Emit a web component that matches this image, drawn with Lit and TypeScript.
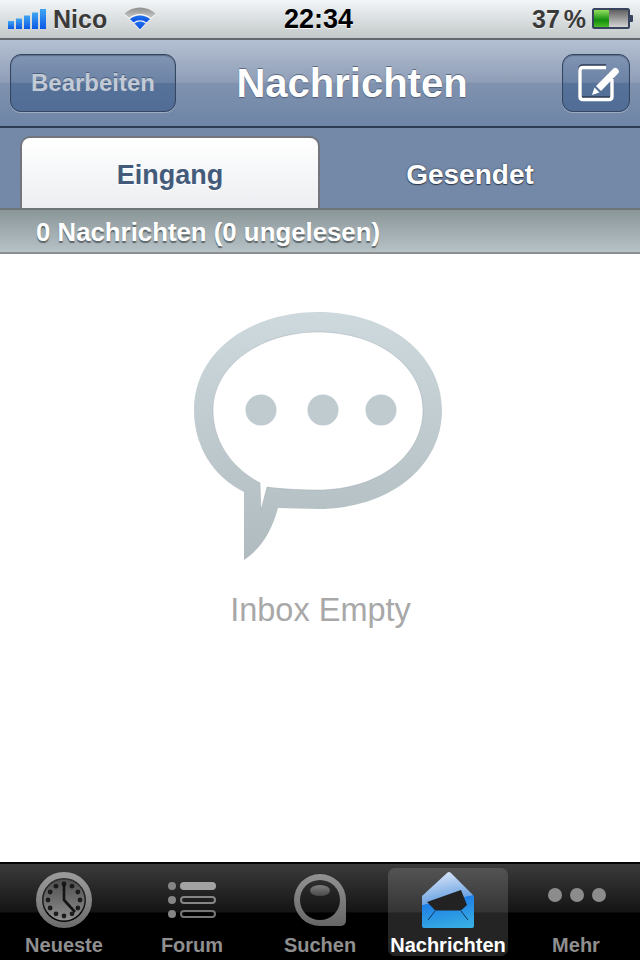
import { LitElement, html, css, svg } from "lit";
import { customElement } from "lit/decorators.js";

const bubbleHole =
  "M260 483C232 468 213 442 213 410C213 366 260 332 318 332C378 332 423 366 423 410C423 456 378 490 318 490C300 490 282 489 267 487L261 510Z";
const bubbleOuter =
  "M244 492C212 476 194 445 194 410C194 352 250 312 318 312C388 312 442 354 442 410C442 468 388 509 318 509L278 508C272 530 262 548 244 560Z";

const clockDots = Array.from({ length: 12 }, (_, i) => {
  const a = (i * Math.PI) / 6;
  return svg`<circle cx=${64 + 16 * Math.sin(a)} cy=${900 - 16 * Math.cos(a)} r="2.4" fill="#1c1c1c"></circle>`;
});

const tabIcons = {
  clock: svg`
    <defs>
      <linearGradient id="clockRing" x1="0" y1="0" x2="0" y2="1"><stop offset="0" stop-color="#9a9a9a"/><stop offset="1" stop-color="#6e6e6e"/></linearGradient>
      <linearGradient id="clockFace" x1="0" y1="0" x2="0" y2="1"><stop offset="0" stop-color="#4e4e4e"/><stop offset="1" stop-color="#8e8e8e"/></linearGradient>
    </defs>
    <circle cx="64" cy="900" r="25" fill="none" stroke="url(#clockRing)" stroke-width="6"></circle>
    <circle cx="64" cy="900" r="20.5" fill="url(#clockFace)"></circle>
    ${clockDots}
    <path d="M64 882V900L75 912" fill="none" stroke="#141414" stroke-width="2.6"></path>`,
  forum: svg`
    <g fill="#858585">
      <circle cx="172" cy="886" r="4"></circle>
      <circle cx="172" cy="900" r="4"></circle>
      <circle cx="172" cy="914" r="4"></circle>
    </g>
    <rect x="180" y="882" width="36" height="8" rx="4" fill="#a2a2a2"></rect>
    <rect x="181" y="897" width="34" height="6" rx="3" fill="none" stroke="#858585" stroke-width="2"></rect>
    <rect x="181" y="911" width="34" height="6" rx="3" fill="none" stroke="#757575" stroke-width="2"></rect>`,
  search: svg`
    <defs>
      <linearGradient id="searchRing" x1="0" y1="0" x2="0" y2="1"><stop offset="0" stop-color="#929292"/><stop offset="1" stop-color="#666"/></linearGradient>
      <linearGradient id="searchGlare" x1="0" y1="0" x2="0" y2="1"><stop offset="0" stop-color="#808080"/><stop offset="1" stop-color="#484848"/></linearGradient>
    </defs>
    <path fill-rule="evenodd" fill="url(#searchRing)" d="M320 874A26 26 0 0 1 346 900V920Q346 926 340 926H320A26 26 0 0 1 320 874ZM320 880A20 20 0 1 0 320 920A20 20 0 1 0 320 880Z"></path>
    <ellipse cx="320" cy="890.5" rx="10" ry="5.5" fill="url(#searchGlare)"></ellipse>`,
  inbox: svg`
    <defs>
      <linearGradient id="envelope" gradientUnits="userSpaceOnUse" x1="446" y1="872" x2="457.3" y2="930.9">
        <stop offset="0" stop-color="#d5e3f8"/><stop offset=".46" stop-color="#6ea4e2"/>
        <stop offset=".47" stop-color="#1f7fe6"/><stop offset="1" stop-color="#39b2e2"/>
      </linearGradient>
    </defs>
    <path fill="url(#envelope)" d="M447 873Q449 871 451 873L474 896V926Q474 928 472 928H424Q422 928 422 926V896Z"></path>
    <path fill="#222" d="M427 902L461 890L467 905L461 910.500H435L432 907Z"></path>
    <path fill="none" stroke="#14385c" stroke-width="1" d="M435 911L428 920M461 911L468 920"></path>`,
  more: svg`
    <g fill="#8c8c8c">
      <circle cx="555" cy="895" r="7"></circle>
      <circle cx="577" cy="895" r="7"></circle>
      <circle cx="599" cy="895" r="7"></circle>
    </g>`,
};

const tabs = [
  { label: "Neueste", x: 4, icon: tabIcons.clock },
  { label: "Forum", x: 132, icon: tabIcons.forum },
  { label: "Suchen", x: 260, icon: tabIcons.search },
  { label: "Nachrichten", x: 388, icon: tabIcons.inbox, active: true },
  { label: "Mehr", x: 516, icon: tabIcons.more },
];

@customElement("app-root")
export class AppRoot extends LitElement {
  static styles = css`
    :host {
      display: flex;
      flex-direction: column;
      width: 640px;
      height: 960px;
      overflow: hidden;
      background: #fff;
      font-family: "Liberation Sans", Arial, sans-serif;
    }
    svg {
      display: block;
    }

    .status {
      flex: 0 0 40px;
      box-sizing: border-box;
      display: grid;
      grid-template-columns: 1fr auto 1fr;
      align-items: center;
      padding: 0 6px 1px 8px;
      border-bottom: 2px solid #63686c;
      background: linear-gradient(#f2f6f8, #c3c8c9);
      font-weight: 700;
      color: #3a3a3a;
      text-shadow: 0 1px 0 rgba(255, 255, 255, 0.8);
    }
    .status-left,
    .status-right {
      display: flex;
      align-items: center;
    }
    .status-right {
      justify-content: flex-end;
    }
    .carrier {
      margin-left: 7px;
      font-size: 25px;
      line-height: 30px;
    }
    .wifi {
      margin-left: 17px;
      filter: drop-shadow(0 1px 0 rgba(255, 255, 255, 0.9));
    }
    .time {
      margin-right: 5px;
      font-size: 27px;
      line-height: 30px;
      color: #000;
    }
    .percent {
      margin-right: 6px;
      font-size: 25px;
      line-height: 30px;
      word-spacing: -3px;
    }

    .nav {
      flex: 0 0 88px;
      box-sizing: border-box;
      display: flex;
      align-items: center;
      justify-content: space-between;
      padding: 0 10px;
      border-bottom: 2px solid #2e3c53;
      background: linear-gradient(#b4c0d2 0, #8f9eb7 49%, #8092af 50%, #6e85a6 100%);
    }
    .nav-btn {
      box-sizing: border-box;
      height: 58px;
      display: flex;
      align-items: center;
      justify-content: center;
      border: 1px solid #33455f;
      border-radius: 11px;
      background: linear-gradient(#8195b3 0, #6c83a6 49%, #567299 50%, #516d96 100%);
      box-shadow: 0 1px 0 rgba(255, 255, 255, 0.3), inset 0 1px 1px rgba(20, 30, 50, 0.35);
    }
    .edit {
      width: 166px;
      font-size: 24px;
      font-weight: 700;
      color: #c2cad6;
      text-shadow: 0 -1px 0 rgba(40, 55, 80, 0.5);
    }
    .compose {
      width: 68px;
    }
    .title {
      margin-right: 34px;
      font-size: 40px;
      line-height: 48px;
      font-weight: 700;
      color: #fff;
      text-shadow: 0 -1px 0 rgba(50, 65, 90, 0.6), 0 1px 1px rgba(50, 65, 90, 0.6);
    }

    .segments {
      flex: 0 0 80px;
      box-sizing: border-box;
      display: grid;
      grid-template-columns: 300px 300px;
      padding: 8px 0 0 20px;
      background: #7489a8;
    }
    .segment {
      display: flex;
      align-items: center;
      justify-content: center;
      font-size: 27px;
      font-weight: 700;
      padding-top: 4px;
    }
    .segment.active {
      box-sizing: border-box;
      border: 2px solid #72767c;
      border-bottom: 0;
      border-radius: 10px 10px 0 0;
      background: linear-gradient(#fff, #eceef1);
      color: #435a7b;
      text-shadow: 0 1px 0 #fff;
    }
    .segment.idle {
      font-size: 28px;
      padding-top: 6px;
      color: #fff;
      text-shadow: 0 0 2px #2f3a4a, 0 1px 1px #2f3a4a;
    }

    .summary {
      flex: 0 0 46px;
      box-sizing: border-box;
      padding: 2px 0 0 36px;
      border-top: 2px solid #6e7576;
      border-bottom: 2px solid #8b8f91;
      background: linear-gradient(#8b9699, #b7c2c7);
      font-size: 25.8px;
      line-height: 40px;
      font-weight: 700;
      color: #fff;
      text-shadow: 0 2px 1px #5d6668;
    }

    .inbox {
      flex: 1;
      display: flex;
      flex-direction: column;
      align-items: center;
      padding-top: 58px;
      margin-left: -4px;
    }
    .empty-label {
      margin: 32px 0 0 5px;
      font-size: 32.5px;
      line-height: 36px;
      color: #a8a8a8;
    }

    .tabbar {
      flex: 0 0 98px;
      box-sizing: border-box;
      display: grid;
      grid-template-columns: repeat(5, 120px);
      gap: 8px;
      padding: 4px 4px 4px;
      border-top: 2px solid #050505;
      background: linear-gradient(#3b3b3b 0, #141414 50%, #000 51%, #000 100%);
    }
    .tab {
      display: flex;
      flex-direction: column;
      align-items: center;
      border-radius: 7px;
      font-size: 20px;
      line-height: 22px;
      font-weight: 700;
      color: #8f8f8f;
    }
    .tab.active {
      background: rgba(255, 255, 255, 0.14);
      color: #fff;
    }
    .tab span {
      padding-top: 2px;
    }
  `;

  render() {
    return html`
      <header class="status">
        <div class="status-left">
          <svg width="38" height="22" viewBox="8 8 38 22">
            <defs>
              <linearGradient id="bars" x1="0" y1="0" x2="0" y2="1">
                <stop offset="0" stop-color="#3fa6f2" /><stop offset="1" stop-color="#0a58e6" />
              </linearGradient>
            </defs>
            <g fill="url(#bars)">
              <rect x="8" y="21" width="6" height="8"></rect>
              <rect x="16" y="18.5" width="6" height="10.5"></rect>
              <rect x="24" y="15.5" width="6" height="13.5"></rect>
              <rect x="32" y="12.5" width="6" height="16.5"></rect>
              <rect x="40" y="9" width="6" height="20"></rect>
            </g>
          </svg>
          <span class="carrier">Nico</span>
          <svg class="wifi" width="32" height="25" viewBox="124 8 32 25">
            <defs>
              <linearGradient id="wifiGray" x1="0" y1="0" x2="0" y2="1">
                <stop offset="0" stop-color="#8e8e8e" /><stop offset="1" stop-color="#c9c9c9" />
              </linearGradient>
              <linearGradient id="wifiBlue" x1="0" y1="0" x2="0" y2="1">
                <stop offset="0" stop-color="#1d6ff0" /><stop offset="1" stop-color="#0d4fd8" />
              </linearGradient>
            </defs>
            <path fill="url(#wifiGray)" d="M124.5 15.5A23 23 0 0 1 155.500 15.500L151 20A17 17 0 0 0 129 20Z"></path>
            <path fill="url(#wifiBlue)" d="M130 21A16 16 0 0 1 150 21L146.500 24.500A10.500 10.500 0 0 0 133.500 24.500Z"></path>
            <path fill="url(#wifiBlue)" d="M134.500 25.500A8.500 8.500 0 0 1 145.500 25.500L140 31.500Z"></path>
          </svg>
        </div>
        <span class="time">22:34</span>
        <div class="status-right">
          <span class="percent">37 %</span>
          <svg width="42" height="22" viewBox="592 9 42 22">
            <defs>
              <linearGradient id="charge" x1="0" y1="0" x2="0" y2="1">
                <stop offset="0" stop-color="#92e060" /><stop offset=".6" stop-color="#118c0c" /><stop offset="1" stop-color="#4cbc28" />
              </linearGradient>
              <linearGradient id="drained" x1="0" y1="0" x2="0" y2="1">
                <stop offset="0" stop-color="#5a5a5a" /><stop offset="1" stop-color="#dadada" />
              </linearGradient>
            </defs>
            <rect x="593" y="10" width="36" height="19" rx="1.500" fill="url(#drained)" stroke="#38435e" stroke-width="2"></rect>
            <rect x="594" y="11" width="15" height="17" fill="url(#charge)"></rect>
            <path d="M630 16H632Q633 16 633 17V22Q633 23 632 23H630Z" fill="#38435e"></path>
          </svg>
        </div>
      </header>

      <nav class="nav">
        <div class="nav-btn edit">Bearbeiten</div>
        <div class="title">Nachrichten</div>
        <div class="nav-btn compose">
          <svg width="48" height="42" viewBox="572 62 48 42">
            <path d="M606 67.500H583Q580 67.500 580 70.500V96.500Q580 99.500 583 99.500H609Q612 99.500 612 96.500V79" fill="none" stroke="#2b3950" stroke-width="3.500" transform="translate(0 -1.500)"></path>
            <path d="M606 67.500H583Q580 67.500 580 70.500V96.500Q580 99.500 583 99.500H609Q612 99.500 612 96.500V79" fill="none" stroke="#fff" stroke-width="3.500"></path>
            <path d="M592 95L594.500 87.500L599.500 92.500Z" fill="#fff"></path>
            <path d="M596 86L613.500 68.500Q615.500 67 617 68.500L618.500 70Q619.500 71.500 618.500 73L601 91Z" fill="#fff"></path>
          </svg>
        </div>
      </nav>

      <section class="segments">
        <div class="segment active">Eingang</div>
        <div class="segment idle">Gesendet</div>
      </section>
      <div class="summary">0 Nachrichten (0 ungelesen)</div>

      <main class="inbox">
        <svg width="248" height="248" viewBox="194 312 248 248">
          <defs>
            <linearGradient id="bubble" x1="0" y1="0" x2="0" y2="1">
              <stop offset="0" stop-color="#ced9de" /><stop offset="1" stop-color="#b0bbc0" />
            </linearGradient>
          </defs>
          <path fill="url(#bubble)" fill-rule="evenodd" d="${bubbleOuter}${bubbleHole}"></path>
          <path fill="none" stroke="#8d9ba2" stroke-opacity=".35" d=${bubbleHole}></path>
          <g fill="#c0cbd0">
            <circle cx="261" cy="410" r="15.500"></circle>
            <circle cx="323" cy="410" r="15.500"></circle>
            <circle cx="381" cy="410" r="15.500"></circle>
          </g>
        </svg>
        <div class="empty-label">Inbox Empty</div>
      </main>

      <footer class="tabbar">
        ${tabs.map(
          (t) => html`
            <div class="tab ${t.active ? "active" : ""}">
              <svg width="120" height="64" viewBox="${t.x} 868 120 64">${t.icon}</svg>
              <span>${t.label}</span>
            </div>
          `
        )}
      </footer>
    `;
  }
}
